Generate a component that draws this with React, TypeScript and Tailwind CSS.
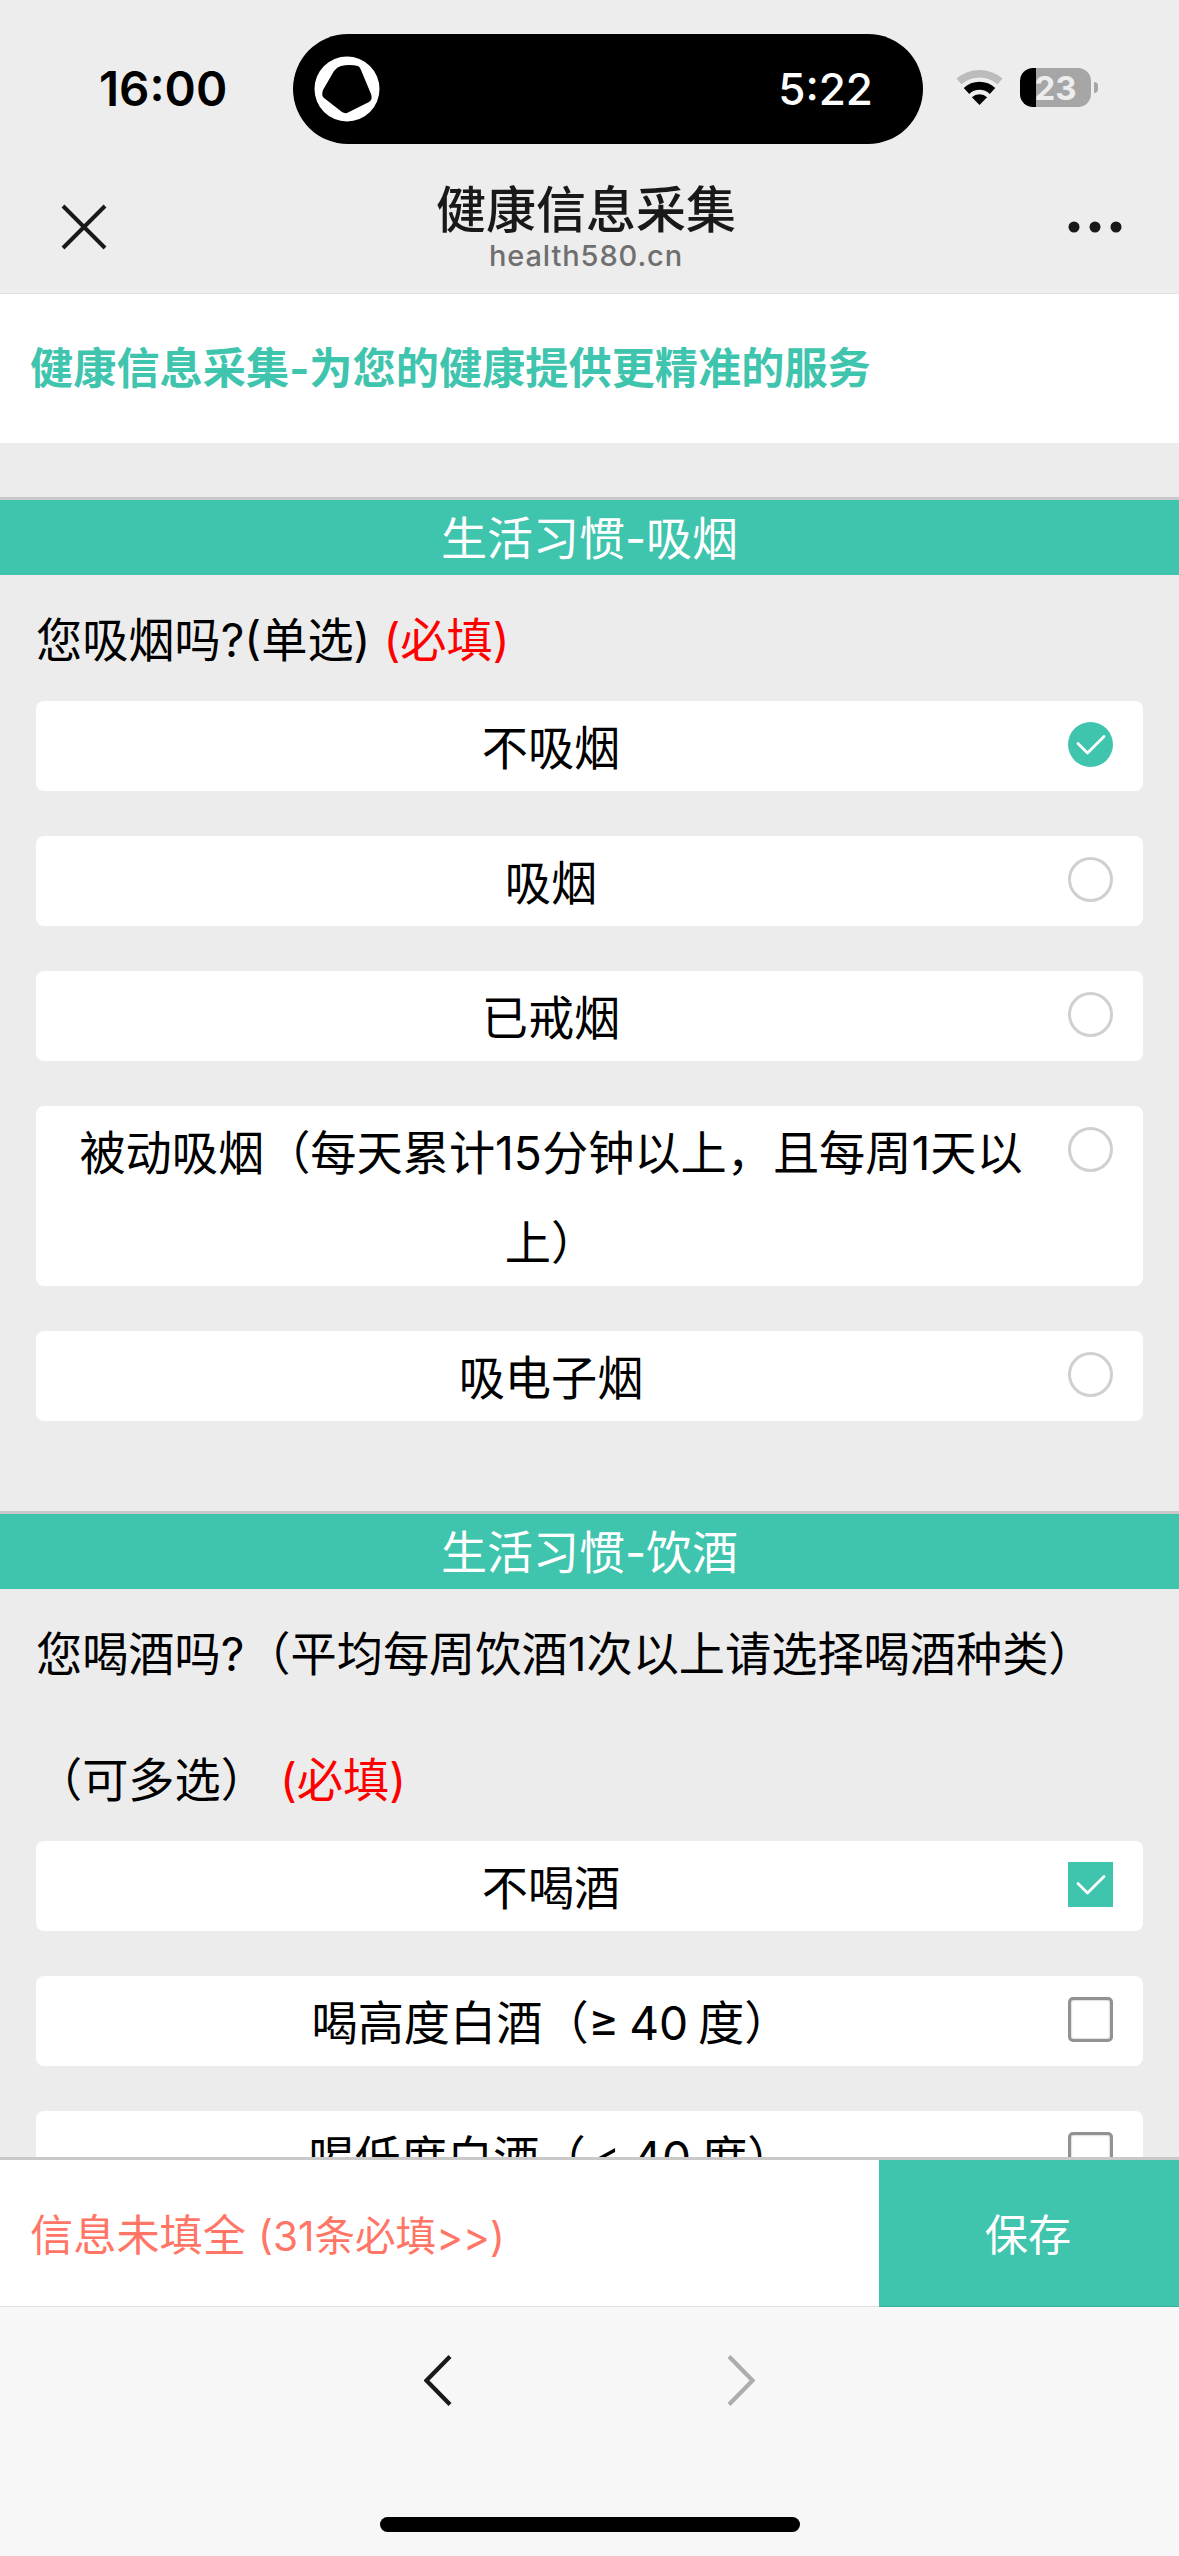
import type { ReactNode } from 'react'

type OptionKind = 'radio' | 'checkbox'

interface Option {
  id: string
  label: ReactNode
  checked?: boolean
}

const smokingOptions: Option[] = [
  { id: 'none', label: '不吸烟', checked: true },
  { id: 'smoke', label: '吸烟' },
  { id: 'quit', label: '已戒烟' },
  { id: 'passive', label: '被动吸烟（每天累计15分钟以上，且每周1天以上）' },
  { id: 'vape', label: '吸电子烟' },
]

const drinkingOptions: Option[] = [
  { id: 'none', label: '不喝酒', checked: true },
  { id: 'strong', label: '喝高度白酒（≥ 40 度）' },
  {
    id: 'light',
    label: (
      <>
        喝低度白酒（<span className="align-[-4px] text-[56px] leading-none font-light">&lt;</span> 40 度）
      </>
    ),
  },
]

function StatusBar() {
  return (
    <div className="flex h-[145px] items-start pt-[34px]">
      <div className="w-[293px] pl-[99px] pt-[25px] text-[47.500px] leading-[60px] font-semibold text-black">16:00</div>
      <div className="flex h-[110px] w-[630px] items-center justify-between rounded-full bg-black pl-[21px] pr-[50px]">
        <svg width="66" height="66" viewBox="0 0 66 66">
          <circle cx="33" cy="33" r="32.5" fill="#fff" />
          <path
            d="M27 10 Q35 8 44 10 Q46 11 47 14 L57 38 Q59 43 55 46 L34 56.500 Q31 58 28 56 L10 42 Q7 39 9 34 L20 15 Q23 11 27 10Z"
            fill="#000"
          />
        </svg>
        <span className="text-[44px] leading-none font-medium text-white">5:22</span>
      </div>
      <div className="flex items-start pl-[33px] pt-[34px]">
        <svg width="48" height="40" viewBox="0 0 48 40">
          <path d="M3 13.400 A31.300 31.300 0 0 1 44 13.400" fill="none" stroke="#bcbcbc" strokeWidth="7.500" />
          <path d="M10.500 23 A19 19 0 0 1 36.500 23" fill="none" stroke="#000" strokeWidth="8" />
          <path d="M23.500 37 L15.900 29.200 A11 11 0 0 1 31.100 29.200Z" fill="#000" />
        </svg>
        <div className="ml-4 flex h-[39px] w-[71px] items-center justify-center overflow-hidden rounded-[13px] bg-[linear-gradient(to_right,#000_16px,#a6a6a6_16px)] pt-px text-[33px] leading-none font-bold text-[#ededed]">
          23
        </div>
        <div className="ml-[3px] mt-[14px] h-[11px] w-1 rounded-r-full bg-[#a6a6a6]" />
      </div>
    </div>
  )
}

function NavBar() {
  return (
    <div className="flex h-[148px] items-start justify-between pl-[61px] pr-[57px] text-[#191919]">
      <svg className="mt-[59px]" width="46" height="46" viewBox="0 0 46 46" stroke="currentColor" strokeWidth="4">
        <path d="M2 2 L44 44 M44 2 L2 44" />
      </svg>
      <div className="flex flex-col items-center pt-[37px] pr-[3px]">
        <h1 className="text-[50px] leading-[56px] font-medium">健康信息采集</h1>
        <p className="pt-px text-[29px] leading-[34px] font-medium tracking-[0.9px] text-[#6f6f6f]">health580.cn</p>
      </div>
      <svg className="mt-[76px]" width="54" height="12" viewBox="0 0 54 12" fill="currentColor">
        <circle cx="6" cy="6" r="5.500" />
        <circle cx="27" cy="6" r="5.500" />
        <circle cx="48" cy="6" r="5.500" />
      </svg>
    </div>
  )
}

function Mark({ kind, checked }: { kind: OptionKind; checked?: boolean }) {
  if (checked) {
    return (
      <svg
        className={kind === 'radio' ? 'rounded-full bg-[#3fc4ad]' : 'bg-[#3fc4ad]'}
        width="45"
        height="45"
        viewBox="0 0 45 45"
        fill="none"
        stroke="#fff"
        strokeWidth="2.800"
        strokeLinecap="round"
        strokeLinejoin="round"
      >
        <path d="M10 21.500 L19.500 31 L36 14.500" />
      </svg>
    )
  }
  if (kind === 'radio') {
    return <div className="size-[45px] rounded-full border-[3px] border-[#d0d0d0]" />
  }
  return (
    <div className="size-[45px] rounded-[5px] border-[3px] border-[#929292] shadow-[inset_0_0_2px_#999]" />
  )
}

function OptionRow({ option, kind }: { option: Option; kind: OptionKind }) {
  return (
    <div className="mb-[45px] flex rounded-lg bg-white pl-[35px] pr-[30px]">
      <div className="w-[960px] pt-0.5 -mb-0.5 text-center leading-[90px] [word-spacing:-3px]">{option.label}</div>
      <div className="ml-auto pt-[21px]">
        <Mark kind={kind} checked={option.checked} />
      </div>
    </div>
  )
}

interface SectionProps {
  title: string
  question: string
  kind: OptionKind
  options: Option[]
}

function Section({ title, question, kind, options }: SectionProps) {
  return (
    <section className="pb-[45px]">
      <h2 className="h-[78px] border-t-[3px] border-[#c9c9c9] bg-[#3fc4ad] text-center text-[46px] leading-[77px] text-white">
        {title}
      </h2>
      <div className="px-9">
        <p className="pt-0.5 -mb-0.5 leading-[126px]">
          {question} <span className="text-[#f00]">(必填)</span>
        </p>
        {options.map((option) => (
          <OptionRow key={option.id} option={option} kind={kind} />
        ))}
      </div>
    </section>
  )
}

function BottomNav() {
  return (
    <div className="flex h-[249px] flex-col items-center justify-between bg-[#f7f7f7] pt-[47px] pb-6">
      <div className="flex w-[331px] justify-between">
        <svg width="28" height="54" viewBox="0 0 28 54" fill="none" stroke="#191919" strokeWidth="4.200">
          <path d="M26 2.500 L2.500 26.500 L26 50.500" />
        </svg>
        <svg width="28" height="54" viewBox="0 0 28 54" fill="none" stroke="#adadad" strokeWidth="4.200">
          <path d="M2 2.500 L25.500 26.500 L2 50.500" />
        </svg>
      </div>
      <div className="h-[15px] w-[420px] rounded-full bg-black" />
    </div>
  )
}

export default function App() {
  return (
    <div className="flex h-[2556px] w-[1179px] flex-col overflow-hidden bg-[#ececec] font-[Inter,'Noto_Sans_CJK_SC',sans-serif] text-[46.200px] text-black">
      <header className="h-[294px] shrink-0 border-b border-[#e0e0e0] bg-[#ededed]">
        <StatusBar />
        <NavBar />
      </header>

      <main className="min-h-0 flex-1 overflow-hidden">
        <div className="mb-[54px] h-[149px] bg-white pl-[30px] text-[43.200px] leading-[149px] font-bold text-[#3fc4ad]">
          健康信息采集-为您的健康提供更精准的服务
        </div>
        <Section title="生活习惯-吸烟" question="您吸烟吗?(单选)" kind="radio" options={smokingOptions} />
        <Section
          title="生活习惯-饮酒"
          question="您喝酒吗?（平均每周饮酒1次以上请选择喝酒种类）（可多选）"
          kind="checkbox"
          options={drinkingOptions}
        />
      </main>

      <div className="flex h-[150px] shrink-0 border-t-[3px] border-[#c9c9c9] text-[43.200px] leading-[150px]">
        <div className="flex-1 border-b border-[#e0e0e0] bg-white pl-[30px] text-[#ff7566]">
          信息未填全 <span className="text-[40.600px]">(31条必填&gt;&gt;)</span>
        </div>
        <button className="w-[300px] border-b border-[#39b09b] bg-[#3fc4ad] pt-1 pr-0.5 text-center leading-[143px] text-white">
          保存
        </button>
      </div>
      <BottomNav />
    </div>
  )
}
